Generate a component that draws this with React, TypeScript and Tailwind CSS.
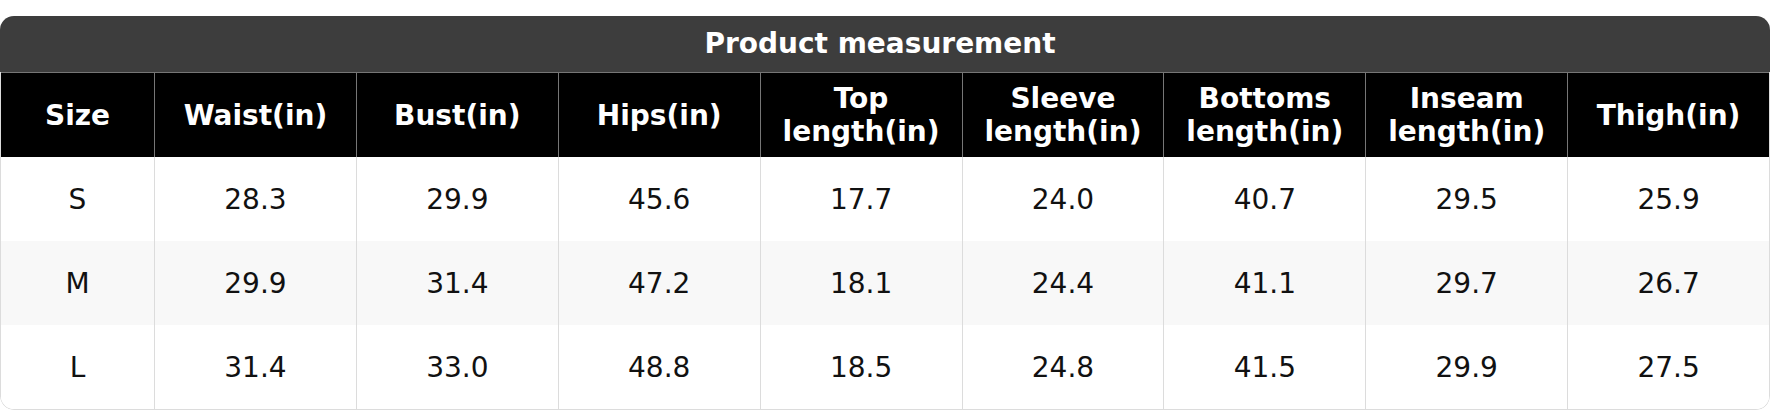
/**
 * Product measurement size chart
 */

const columns = [
  ['Size'],
  ['Waist(in)'],
  ['Bust(in)'],
  ['Hips(in)'],
  ['Top', 'length(in)'],
  ['Sleeve', 'length(in)'],
  ['Bottoms', 'length(in)'],
  ['Inseam', 'length(in)'],
  ['Thigh(in)']
];

const rows = [
  ['S', '28.3', '29.9', '45.6', '17.7', '24.0', '40.7', '29.5', '25.9'],
  ['M', '29.9', '31.4', '47.2', '18.1', '24.4', '41.1', '29.7', '26.7'],
  ['L', '31.4', '33.0', '48.8', '18.5', '24.8', '41.5', '29.9', '27.5']
];

export default function App() {
  return (
    <div className="bg-white pt-4 font-['DejaVu_Sans',sans-serif]">
      <div className="overflow-hidden rounded-[14px]">
        {/* 標題 */}
        <div className="flex h-14 items-center justify-center bg-[#3d3d3d] pr-[10px] pb-px text-[28px] font-bold text-white">
          Product measurement
        </div>

        <div className="overflow-hidden rounded-b-[14px] border-x border-b border-[#dcdcdc]">
          {/* 表頭 */}
          <div className="grid grid-cols-[153px_repeat(8,minmax(0,1fr))] border-t border-[#767676] bg-black">
            {columns.map((col, i) => (
              <div
                key={i}
                className={`flex h-[84px] flex-col items-center justify-center text-center text-[28px] leading-[33px] font-bold text-white ${
                  i > 0 ? 'border-l border-[#767676]' : ''
                }`}
              >
                {col.map((line) => (
                  <span key={line}>{line}</span>
                ))}
              </div>
            ))}
          </div>

          {/* 數據 */}
          {rows.map((row, r) => (
            <div
              key={row[0]}
              className={`grid grid-cols-[153px_repeat(8,minmax(0,1fr))] ${
                r % 2 === 1 ? 'bg-[#f8f8f8]' : 'bg-white'
              }`}
            >
              {row.map((cell, i) => (
                <div
                  key={i}
                  className={`flex h-[84px] items-center justify-center pt-[2px] text-[28px] text-[#111] ${
                    i > 0 ? 'border-l border-[#dcdcdc]' : ''
                  }`}
                >
                  {cell}
                </div>
              ))}
            </div>
          ))}
        </div>
      </div>
    </div>
  );
}
